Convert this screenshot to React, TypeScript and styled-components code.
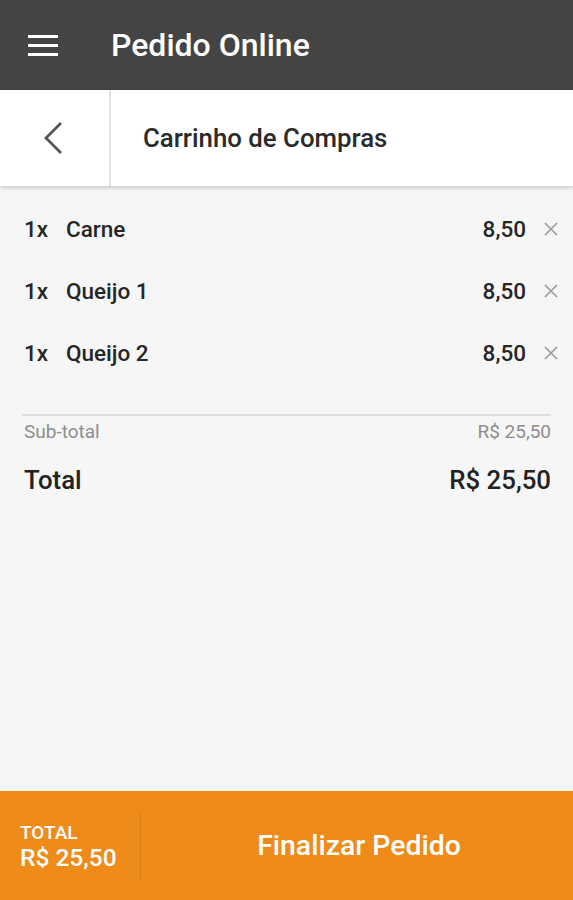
import * as React from 'react';
import styled, { createGlobalStyle } from 'styled-components';

const GlobalStyle = createGlobalStyle`
  html, body {
    margin: 0;
    padding: 0;
    background: #f6f6f6;
  }
  body {
    font-family: Roboto, "Noto Sans", "Liberation Sans", sans-serif;
  }
`;

const items = [
  { qty: 1, name: 'Carne', price: '8,50' },
  { qty: 1, name: 'Queijo 1', price: '8,50' },
  { qty: 1, name: 'Queijo 2', price: '8,50' },
];

const Page = styled.div`
  width: 573px;
  height: 900px;
  display: flex;
  flex-direction: column;
  background: #f6f6f6;
  overflow: hidden;
`;

const TopBar = styled.header`
  height: 90px;
  flex: none;
  display: flex;
  align-items: center;
  background: #444444;
  color: #fff;
`;

const MenuButton = styled.div`
  width: 111px;
  display: flex;
  padding-left: 28px;
  box-sizing: border-box;
  flex-direction: column;
  gap: 6px;

  span {
    display: block;
    width: 30px;
    height: 3px;
    background: #fff;
  }
`;

const AppTitle = styled.h1`
  margin: 0;
  font-size: 32px;
  font-weight: 500;
`;

const SubHeader = styled.div`
  height: 96px;
  flex: none;
  display: flex;
  background: #fff;
  box-shadow: 0 2px 4px rgba(0, 0, 0, 0.18);
  position: relative;
  z-index: 1;
`;

const BackButton = styled.div`
  width: 111px;
  display: flex;
  align-items: center;
  justify-content: center;
  border-right: 2px solid #e2e2e2;
  padding-right: 4px;
  box-sizing: border-box;
`;

const SubTitle = styled.h2`
  margin: 0;
  padding-left: 32px;
  display: flex;
  align-items: center;
  font-size: 25.8px;
  font-weight: 500;
  color: #2a2a2a;
`;

const Content = styled.main`
  flex: 1;
  padding: 12px 15px 0 24px;
`;

const ItemRow = styled.div`
  height: 62px;
  display: flex;
  align-items: center;
  font-size: 22.5px;
  font-weight: 500;
  color: #262626;
`;

const Qty = styled.span`
  width: 42px;
`;

const Name = styled.span`
  flex: 1;
`;

const Price = styled.span`
  margin-right: 18px;
`;

const Remove = styled.span`
  width: 14px;
  display: flex;
  color: #9a9a9a;
`;

const Divider = styled.hr`
  margin: 30px 7px 0 -2px;
  border: none;
  height: 2px;
  background: #dedede;
`;

const SummaryRow = styled.div<{ $big?: boolean }>`
  display: flex;
  justify-content: space-between;
  padding-right: 7px;
  font-size: ${(p) => (p.$big ? '25.8px' : '19px')};
  font-weight: ${(p) => (p.$big ? 500 : 400)};
  color: ${(p) => (p.$big ? '#222' : '#8e8e8e')};
  margin-top: ${(p) => (p.$big ? '22px' : '4px')};
`;

const BottomBar = styled.footer`
  height: 109px;
  flex: none;
  display: flex;
  align-items: center;
  background: #ee8b19;
  color: #fff;
`;

const TotalBox = styled.div`
  width: 141px;
  height: 70px;
  box-sizing: border-box;
  padding-left: 20px;
  padding-top: 3px;
  display: flex;
  flex-direction: column;
  justify-content: center;
  border-right: 1px solid #d97f16;
  font-weight: 500;
`;

const TotalLabel = styled.span`
  font-size: 19px;
  line-height: 22px;
`;

const TotalValue = styled.span`
  font-size: 24.5px;
  line-height: 28px;
`;

const FinishButton = styled.div`
  flex: 1;
  text-align: center;
  font-size: 28.4px;
  font-weight: 500;
  padding-left: 4px;
`;

const Cross = () => (
  <svg width="14" height="14" viewBox="0 0 14 14">
    <path d="M1 1 L13 13 M13 1 L1 13" stroke="currentColor" strokeWidth="1.6" />
  </svg>
);

export default function App() {
  return (
    <Page>
      <GlobalStyle />
      <TopBar>
        <MenuButton>
          <span />
          <span />
          <span />
        </MenuButton>
        <AppTitle>Pedido Online</AppTitle>
      </TopBar>

      <SubHeader>
        <BackButton>
          <svg width="22" height="34" viewBox="0 0 22 34">
            <path d="M19 2 L4 17 L19 32" fill="none" stroke="#555" strokeWidth="2.8" />
          </svg>
        </BackButton>
        <SubTitle>Carrinho de Compras</SubTitle>
      </SubHeader>

      <Content>
        {items.map((item, i) => (
          <ItemRow key={i}>
            <Qty>{item.qty}x</Qty>
            <Name>{item.name}</Name>
            <Price>{item.price}</Price>
            <Remove>
              <Cross />
            </Remove>
          </ItemRow>
        ))}
        <Divider />
        <SummaryRow>
          <span>Sub-total</span>
          <span>R$ 25,50</span>
        </SummaryRow>
        <SummaryRow $big>
          <span>Total</span>
          <span>R$ 25,50</span>
        </SummaryRow>
      </Content>

      <BottomBar>
        <TotalBox>
          <TotalLabel>TOTAL</TotalLabel>
          <TotalValue>R$ 25,50</TotalValue>
        </TotalBox>
        <FinishButton>Finalizar Pedido</FinishButton>
      </BottomBar>
    </Page>
  );
}
